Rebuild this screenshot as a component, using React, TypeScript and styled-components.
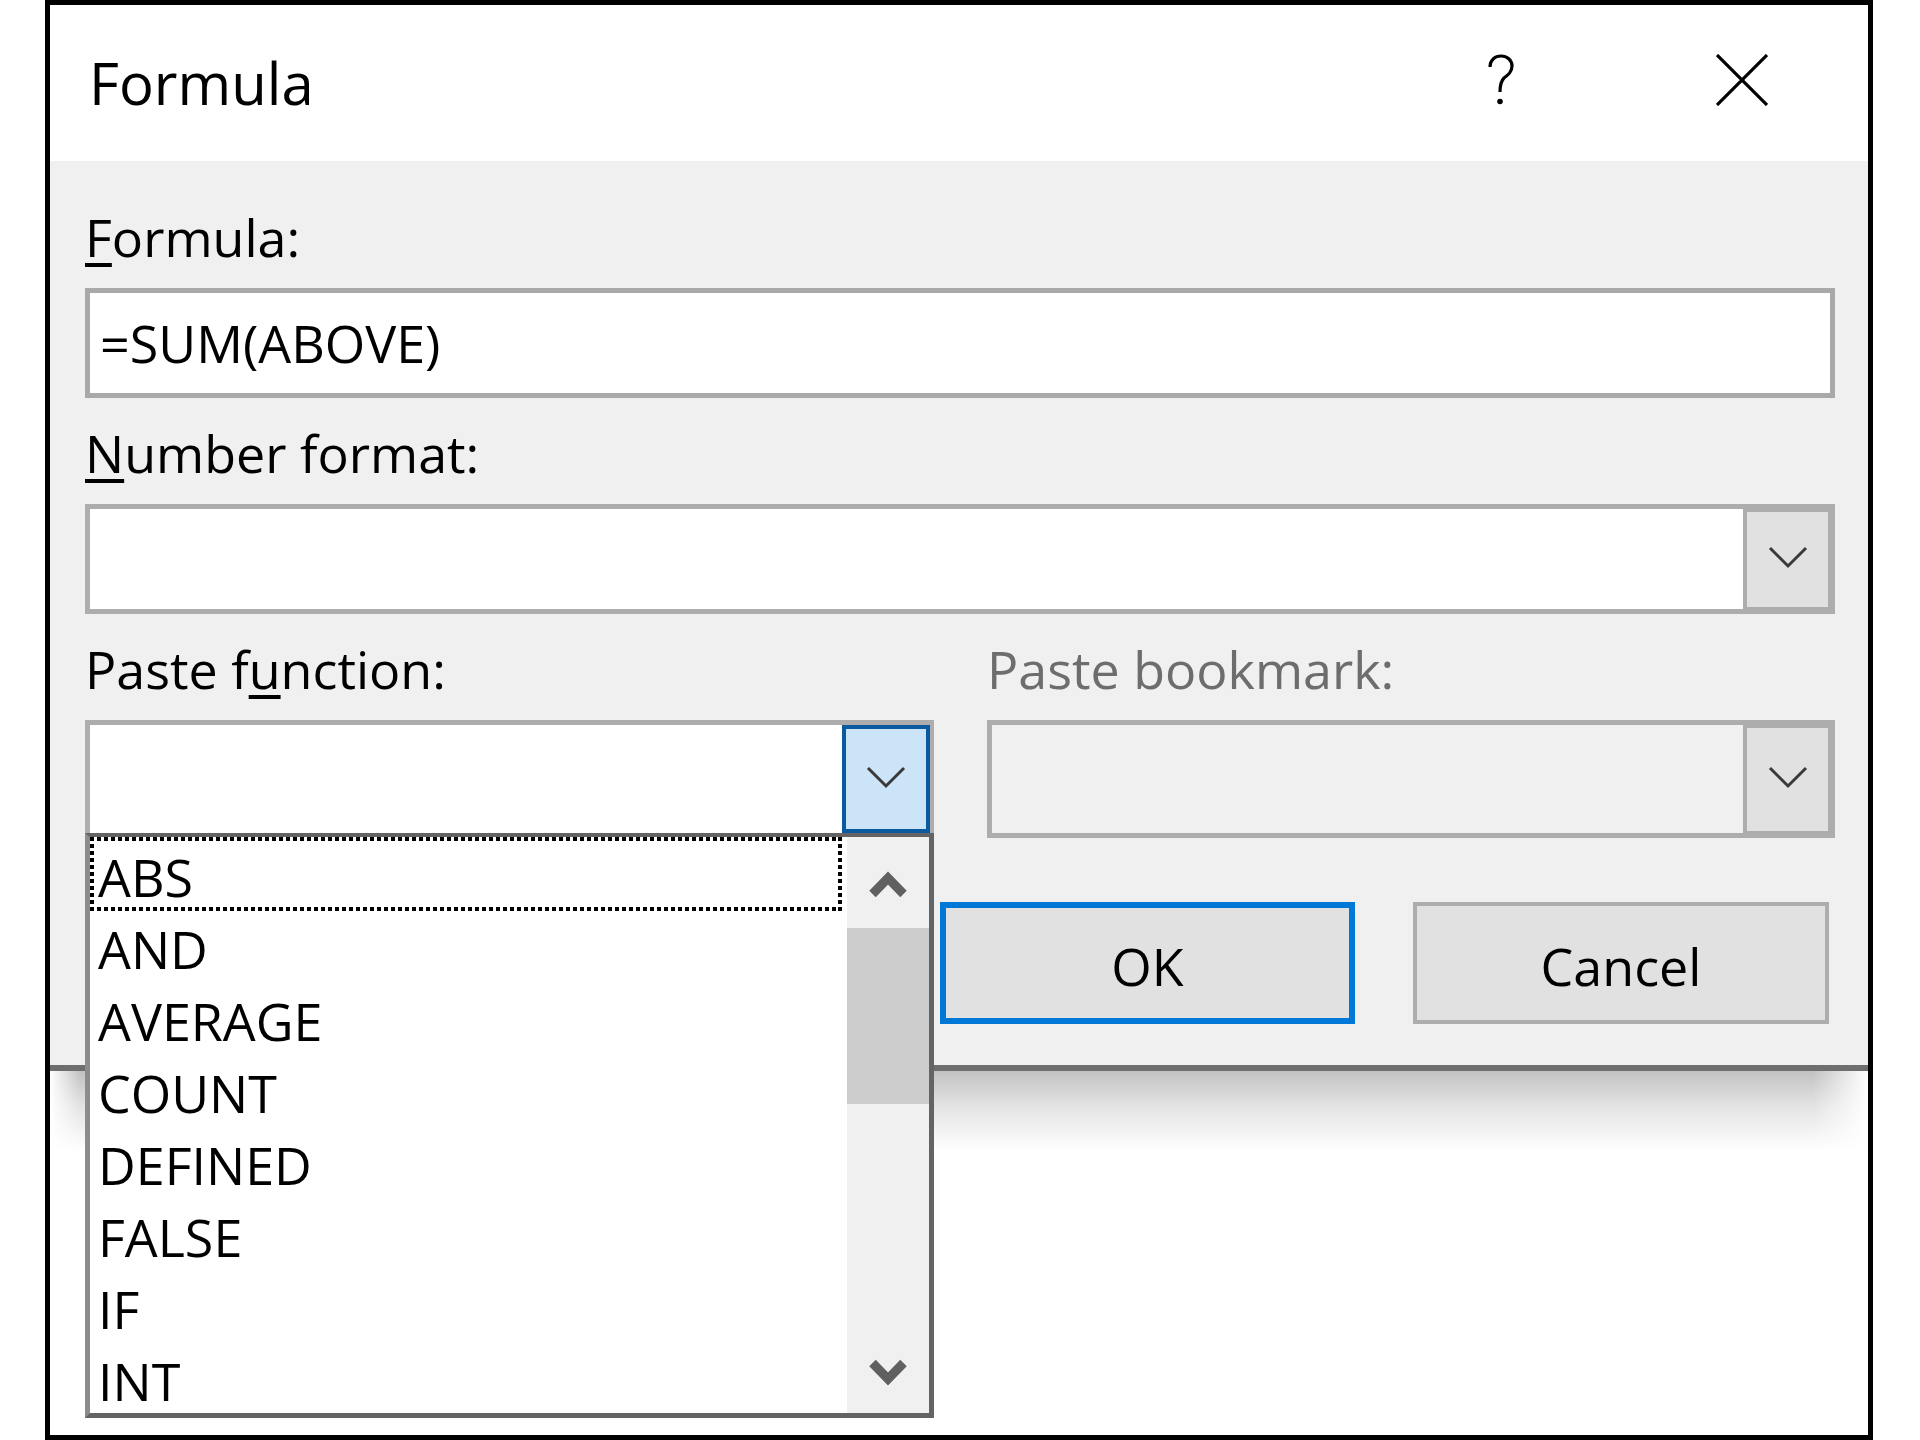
import React from "react";
import styled, { createGlobalStyle } from "styled-components";

const GlobalStyle = createGlobalStyle`
  html, body { margin: 0; padding: 0; background: #fff; }
  body { font-family: "Open Sans", "Liberation Sans", sans-serif; color: #000; }
  * { box-sizing: border-box; }
`;

const Page = styled.div`
  width: 1920px;
  height: 1440px;
  padding-left: 45px;
  background: #fff;
`;

const Frame = styled.div`
  width: 1828px;
  height: 1440px;
  border: 5px solid #000;
  background: #fff;
  display: flex;
  flex-direction: column;
`;

const TitleBar = styled.div`
  height: 156px;
  flex: none;
  display: flex;
  align-items: center;
  padding-left: 39px;
  background: #fff;
`;

const Title = styled.div`
  font-size: 58px;
  line-height: 80px;
  flex: 1;
`;

const CaptionButton = styled.div<{ $w: number }>`
  width: ${(p) => p.$w}px;
  height: 100%;
  display: flex;
  align-items: center;
  justify-content: center;
  padding-bottom: 6px;
`;

const Body = styled.div`
  height: 910px;
  flex: none;
  background: #f0f0f0;
  border-bottom: 6px solid #6e6e6e;
  padding: 46px 33px 0 35px;
  display: flex;
  flex-direction: column;
  position: relative;
`;

const Field = styled.div<{ $mt?: number }>`
  display: flex;
  flex-direction: column;
  gap: 21px;
  margin-top: ${(p) => p.$mt ?? 0}px;
  position: relative;
`;

const Label = styled.div<{ $disabled?: boolean }>`
  font-size: 52px;
  line-height: 60px;
  height: 60px;
  white-space: nowrap;
  color: ${(p) => (p.$disabled ? "#6d6d6d" : "#000")};
`;

const Key = styled.span`
  text-decoration: underline;
  text-decoration-thickness: 4px;
  text-underline-offset: 6px;
`;

const TextBox = styled.div`
  height: 110px;
  border: 5px solid #a9a9a9;
  background: #fff;
  padding-left: 10px;
  display: flex;
  align-items: center;
  font-size: 52px;
  line-height: 60px;
`;

const Combo = styled.div<{ $h: number; $disabled?: boolean; $open?: boolean }>`
  height: ${(p) => p.$h}px;
  display: flex;
  border-style: solid;
  border-color: #adadad;
  border-width: ${(p) => (p.$open ? "5px 4px 0 5px" : "5px")};
  background: ${(p) => (p.$disabled ? "#f0f0f0" : "#fff")};
`;

const ComboField = styled.div`
  flex: 1;
`;

const DropButton = styled.div<{ $active?: boolean }>`
  flex: none;
  width: ${(p) => (p.$active ? 88 : 87)}px;
  display: flex;
  align-items: center;
  justify-content: center;
  border-style: solid;
  border-color: ${(p) => (p.$active ? "#0a5a9f" : "#adadad")};
  border-width: ${(p) => (p.$active ? "4px" : "3px 2px 2px 4px")};
  background: ${(p) => (p.$active ? "#cce4f7" : "#e1e1e1")};
  padding-bottom: ${(p) => (p.$active ? 4 : 6)}px;
`;

const Columns = styled.div`
  display: grid;
  grid-template-columns: 849px 1fr;
  column-gap: 53px;
  margin-top: 25px;
`;

const ComboWrap = styled.div`
  position: relative;
`;

const ListPopup = styled.div`
  position: absolute;
  top: 100%;
  left: 0;
  width: 100%;
  height: 585px;
  z-index: 5;
  background: #fff;
  border-style: solid;
  border-color: #646464 #646464 #646464 #8c8c8c;
  border-width: 4px 5px 5px 5px;
  display: flex;
`;

const Items = styled.div`
  flex: 1;
  display: flex;
  flex-direction: column;
`;

const Item = styled.div<{ $focus?: boolean }>`
  height: 72px;
  flex: none;
  margin-right: 5px;
  padding: 10px 0 0 8px;
  font-size: 52px;
  line-height: 60px;
  position: relative;
  &::after {
    content: "";
    display: ${(p) => (p.$focus ? "block" : "none")};
    position: absolute;
    left: 0;
    right: 0;
    top: 0;
    bottom: -2px;
    background:
      repeating-linear-gradient(to right, #000 0 4px, transparent 4px 7px) left top / 100% 4px no-repeat,
      repeating-linear-gradient(to right, #000 0 4px, transparent 4px 7px) left bottom / 100% 4px no-repeat,
      repeating-linear-gradient(to bottom, #000 0 4px, transparent 4px 7px) left top / 4px 100% no-repeat,
      repeating-linear-gradient(to bottom, #000 0 4px, transparent 4px 7px) right top / 4px 100% no-repeat;
  }
`;

const ScrollBar = styled.div`
  width: 82px;
  flex: none;
  background: #f0f0f0;
  display: flex;
  flex-direction: column;
`;

const ScrollArrow = styled.div<{ $down?: boolean }>`
  height: 91px;
  flex: none;
  display: flex;
  align-items: center;
  justify-content: center;
  padding-top: ${(p) => (p.$down ? 12 : 0)}px;
`;

const Thumb = styled.div`
  height: 176px;
  flex: none;
  background: #cdcdcd;
`;

const Track = styled.div`
  flex: 1;
`;

const ButtonRow = styled.div`
  display: flex;
  justify-content: flex-end;
  gap: 58px;
  padding-right: 6px;
  margin-top: 64px;
`;

const DialogButton = styled.div<{ $default?: boolean }>`
  width: ${(p) => (p.$default ? 415 : 416)}px;
  height: 122px;
  background: #e1e1e1;
  border: ${(p) => (p.$default ? "6px solid #0078d7" : "4px solid #adadad")};
  display: flex;
  align-items: center;
  justify-content: center;
  padding-top: 6px;
  font-size: 52px;
  line-height: 60px;
`;

const Shadow = styled.div`
  height: 80px;
  flex: none;
  background:
    linear-gradient(to right, #fff 0, rgba(255, 255, 255, 0) 30px, rgba(255, 255, 255, 0) calc(100% - 55px), #fff 100%),
    linear-gradient(to bottom, #c2c2c2 0, #e4e4e4 45%, #fff 100%);
`;

const ThinChevron = () => (
  <svg width="40" height="24" viewBox="0 0 40 24">
    <polyline points="2,3 20,21 38,3" fill="none" stroke="#3a3a3a" strokeWidth="3" />
  </svg>
);

const ThickChevron = ({ up }: { up?: boolean }) => (
  <svg width="40" height="30" viewBox="0 0 40 30" style={up ? undefined : { transform: "rotate(180deg)" }}>
    <polyline points="4.5,26 20,10 35.5,26" fill="none" stroke="#606060" strokeWidth="9" strokeLinejoin="miter" />
  </svg>
);

const HelpIcon = () => (
  <svg width="28" height="52" viewBox="0 0 28 52">
    <path d="M3 13 C3 6 8 2 14 2 C20 2 25 6 25 12 C25 18 21 21 17 24 C14 27 13 30 13 38" fill="none" stroke="#000" strokeWidth="3.2" />
    <circle cx="13" cy="47.5" r="2.8" fill="#000" />
  </svg>
);

const CloseIcon = () => (
  <svg width="52" height="52" viewBox="0 0 52 52">
    <path d="M1 1 L51 51 M51 1 L1 51" stroke="#000" strokeWidth="3.2" />
  </svg>
);

const functions = ["ABS", "AND", "AVERAGE", "COUNT", "DEFINED", "FALSE", "IF", "INT"];

export default function App() {
  return (
    <>
      <GlobalStyle />
      <Page>
        <Frame>
          <TitleBar>
            <Title>Formula</Title>
            <CaptionButton $w={230}>
              <HelpIcon />
            </CaptionButton>
            <CaptionButton $w={252}>
              <CloseIcon />
            </CaptionButton>
          </TitleBar>
          <Body>
            <Field>
              <Label>
                <Key>F</Key>ormula:
              </Label>
              <TextBox>=SUM(ABOVE)</TextBox>
            </Field>
            <Field $mt={25}>
              <Label>
                <Key>N</Key>umber format:
              </Label>
              <Combo $h={110}>
                <ComboField />
                <DropButton>
                  <ThinChevron />
                </DropButton>
              </Combo>
            </Field>
            <Columns>
              <Field>
                <Label>
                  Paste f<Key>u</Key>nction:
                </Label>
                <ComboWrap>
                  <Combo $h={113} $open>
                    <ComboField />
                    <DropButton $active>
                      <ThinChevron />
                    </DropButton>
                  </Combo>
                  <ListPopup>
                    <Items>
                      {functions.map((f, i) => (
                        <Item key={f} $focus={i === 0}>
                          {f}
                        </Item>
                      ))}
                    </Items>
                    <ScrollBar>
                      <ScrollArrow>
                        <ThickChevron up />
                      </ScrollArrow>
                      <Thumb />
                      <Track />
                      <ScrollArrow $down>
                        <ThickChevron />
                      </ScrollArrow>
                    </ScrollBar>
                  </ListPopup>
                </ComboWrap>
              </Field>
              <Field>
                <Label $disabled>Paste bookmark:</Label>
                <Combo $h={118} $disabled>
                  <ComboField />
                  <DropButton>
                    <ThinChevron />
                  </DropButton>
                </Combo>
              </Field>
            </Columns>
            <ButtonRow>
              <DialogButton $default>OK</DialogButton>
              <DialogButton>Cancel</DialogButton>
            </ButtonRow>
          </Body>
          <Shadow />
        </Frame>
      </Page>
    </>
  );
}
